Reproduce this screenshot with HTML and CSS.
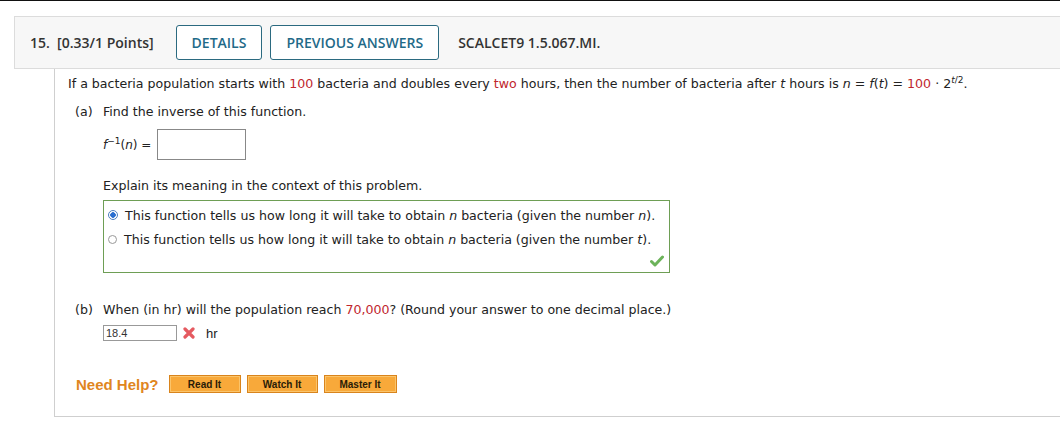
FILE: index.html
```html
<!DOCTYPE html>
<html>
<head>
<meta charset="utf-8">
<link rel="stylesheet" href="styles.css">
</head>
<body>
<div class="topline"></div>
<div class="header">
  <span class="qnum">15.&nbsp; [0.33/1 Points]</span>
  <span class="hbtn">DETAILS</span>
  <span class="hbtn wide">PREVIOUS ANSWERS</span>
  <span class="qid">SCALCET9 1.5.067.MI.</span>
</div>
<div class="content">
  <p class="intro">If a bacteria population starts with <span class="red">100</span> bacteria and doubles every <span class="red">two</span> hours, then the number of bacteria after <i>t</i> hours is <i>n</i> = <i>f</i>(<i>t</i>) = <span class="red">100</span> · 2<sup><i>t</i>/2</sup>.</p>
  <div class="part">
    <span class="plabel">(a)</span>
    <div class="pbody">
      <div class="ptext">Find the inverse of this function.</div>
      <div class="inv">
        <span class="invlabel"><i>f</i><sup>−1</sup>(<i>n</i>) =</span>
        <span class="bigbox"></span>
      </div>
      <div class="explain">Explain its meaning in the context of this problem.</div>
      <div class="choices">
        <div class="choice"><span class="radio on"></span><span>This function tells us how long it will take to obtain <i>n</i> bacteria (given the number <i>n</i>).</span></div>
        <div class="choice"><span class="radio"></span><span>This function tells us how long it will take to obtain <i>n</i> bacteria (given the number <i>t</i>).</span></div>
        <svg class="check" width="14" height="12" viewBox="0 0 14 12"><path d="M1.5 6.5 L5 10 L12.5 2" fill="none" stroke="#6cb35a" stroke-width="3" stroke-linecap="round" stroke-linejoin="round"/></svg>
      </div>
    </div>
  </div>
  <div class="part partb">
    <span class="plabel">(b)</span>
    <div class="pbody">
      <div class="ptext">When (in hr) will the population reach <span class="red">70,000</span>? (Round your answer to one decimal place.)</div>
      <div class="ansrow">
        <span class="smallbox">18.4</span>
        <svg class="xmark" width="12" height="12" viewBox="0 0 12 12"><path d="M2 2 L10 10 M10 2 L2 10" stroke="#e55a60" stroke-width="3.2" stroke-linecap="round"/></svg>
        <span class="unit">hr</span>
      </div>
    </div>
  </div>
  <div class="help">
    <span class="needhelp">Need Help?</span>
    <span class="obtn">Read It</span>
    <span class="obtn">Watch It</span>
    <span class="obtn">Master It</span>
  </div>
</div>
</body>
</html>
```
FILE: styles.css
```css
html, body { margin: 0; padding: 0; background: #fff; overflow: hidden; }
.topline { height: 1px; background: #111; }
.header {
  margin: 15px -10px 0 14px;
  height: 51px;
  background: #f7f7f7;
  border: 1px solid #dcdcdc;
  display: flex;
  align-items: center;
  font-family: "Open Sans", sans-serif;
  font-size: 14px;
  font-weight: 600;
  color: #333;
  padding-left: 15px;
}
.qnum { margin-right: 22px; }
.hbtn {
  border: 1px solid #2b6a80;
  border-radius: 3px;
  height: 33px;
  display: flex;
  align-items: center;
  padding: 0 15px;
  color: #1f6a88;
  margin-right: 8px;
  background: #fff;
}
.hbtn.wide { padding: 0 15px; }
.qid { margin-left: 11px; }
.content {
  margin-left: 54px;
  border-left: 1px solid #cfcfcf;
  border-bottom: 1px solid #cfcfcf;
  height: 347px;
  padding-left: 13px;
  font-family: "DejaVu Sans", Verdana, sans-serif;
  font-size: 12.6px;
  color: #222;
}
.intro { margin: 0; padding-top: 7px; line-height: 16px; }
.red { color: #c0262d; }
sup { font-size: 9px; vertical-align: 5px; line-height: 0; }
.part { display: flex; margin-top: 12px; }
.plabel { width: 35px; padding-left: 7px; box-sizing: border-box; line-height: 16px; }
.pbody { display: flex; flex-direction: column; }
.ptext { line-height: 16px; }
.inv { display: flex; align-items: center; margin-top: 9px; }
.invlabel { margin-right: 6px; font-size: 12px; }
.bigbox { width: 87px; height: 29px; border: 1px solid #888; display: inline-block; }
.explain { margin-top: 18px; line-height: 16px; }
.choices {
  position: relative;
  margin-top: 6px;
  width: 567px;
  height: 73px;
  border: 1px solid #6e9e55;
  padding-top: 2px;
  box-sizing: border-box;
}
.choice { display: flex; align-items: center; height: 24px; padding-left: 4px; }
.radio {
  width: 9px; height: 9px; border: 1px solid #999; border-radius: 50%;
  margin-right: 7px; box-sizing: border-box; display: inline-block; background: #fff; flex: none;
}
.radio.on { border-color: #4c7fbf; background: radial-gradient(circle, #2a6fd0 0 2.5px, #fff 3px); width: 10px; height: 10px; }
.check { position: absolute; right: 5px; bottom: 5px; }
.partb { margin-top: 29px; }
.ansrow { display: flex; align-items: center; margin-top: 7px; }
.smallbox {
  width: 74px; height: 16px; border: 1px solid #999; box-sizing: border-box;
  font-family: "Liberation Sans", Arial, sans-serif; font-size: 11px; color: #333;
  padding-left: 2px; line-height: 14px;
}
.xmark { margin-left: 6px; }
.unit { margin-left: 11px; font-family: "Liberation Sans", Arial, sans-serif; font-size: 13px; }
.help { display: flex; align-items: center; margin-top: 34px; padding-left: 8px; }
.needhelp {
  font-family: "Liberation Sans", Arial, sans-serif; font-weight: bold; font-size: 15px;
  color: #e0861e; margin-right: 10px;
}
.obtn {
  height: 18px; box-sizing: border-box;
  border: 1px solid #d9841c;
  background: #f8a93a;
  box-shadow: inset 0 0 0 1px #fbc46a;
  font-family: "Liberation Sans", Arial, sans-serif; font-weight: bold; font-size: 10px;
  color: #2a1c08;
  display: flex; align-items: center; justify-content: center;
  margin-right: 6px;
}
.obtn:nth-of-type(2) { width: 72px; }
.obtn:nth-of-type(3) { width: 71px; }
.obtn:nth-of-type(4) { width: 73px; }
```
